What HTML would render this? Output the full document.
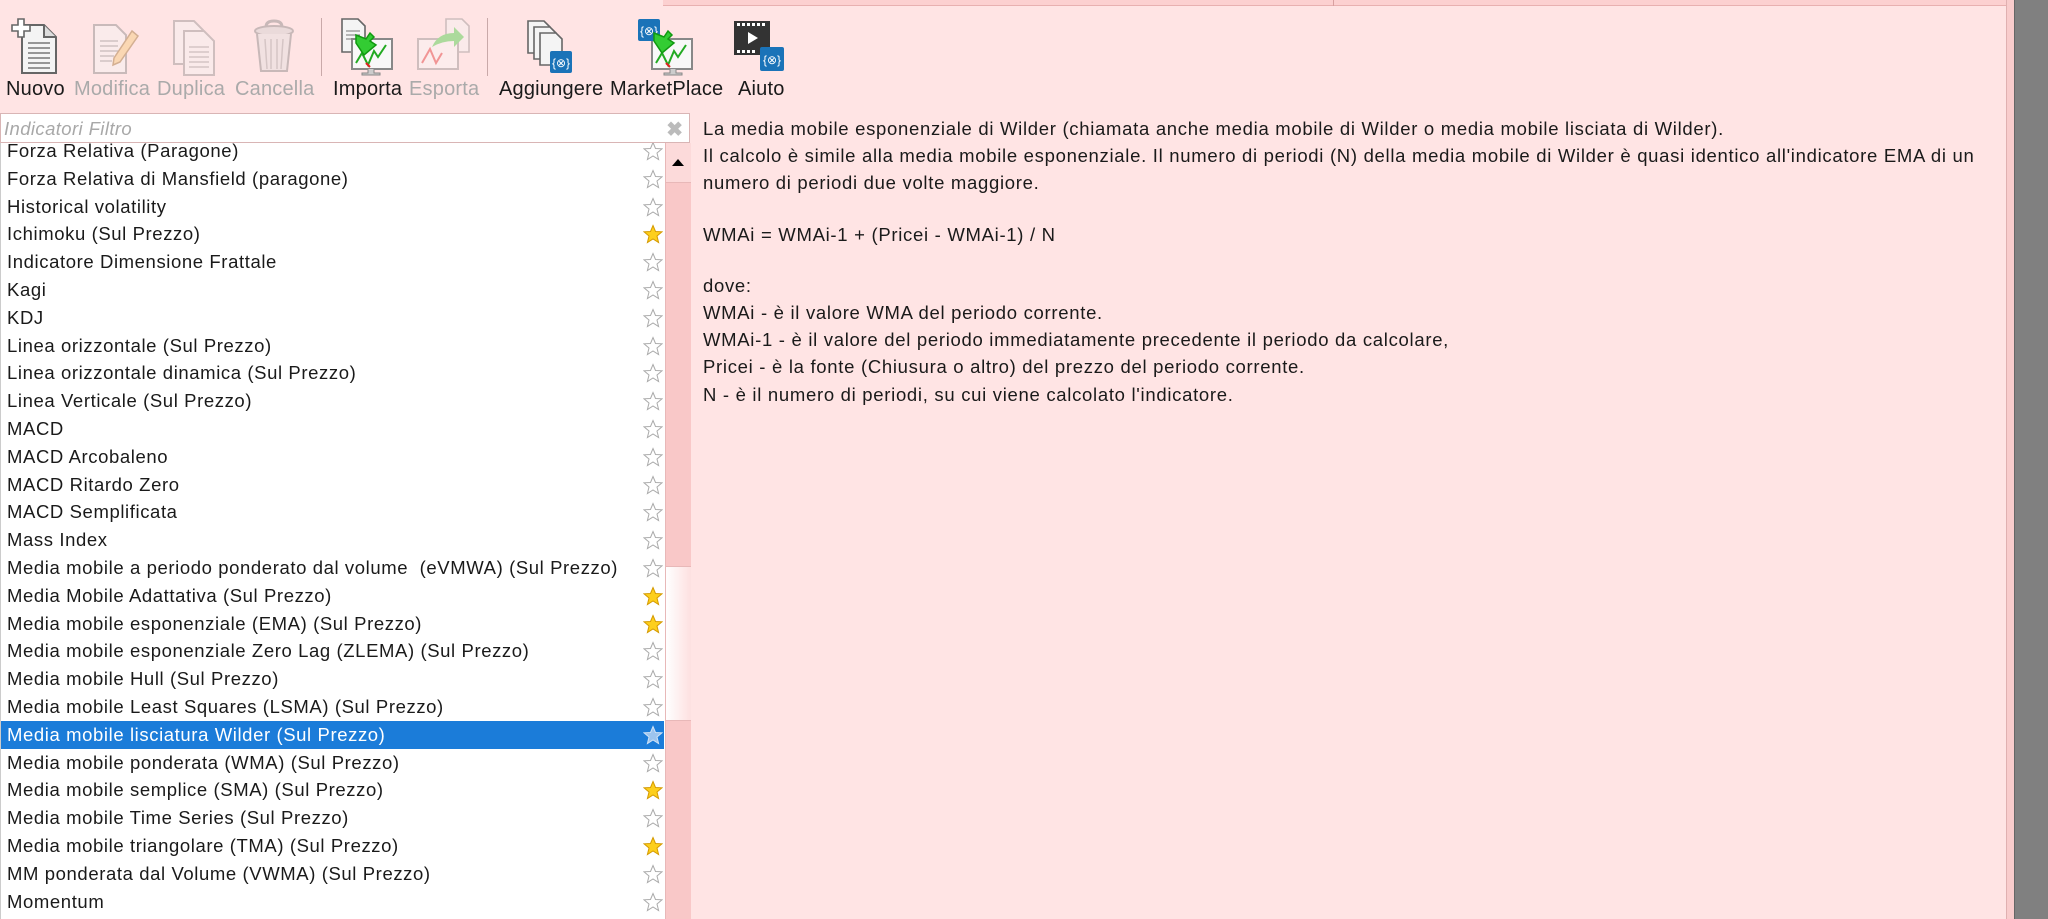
<!DOCTYPE html>
<html><head><meta charset="utf-8"><style>
*{margin:0;padding:0;box-sizing:border-box}
body{width:2048px;height:919px;overflow:hidden;background:#ffe4e4;font-family:"Liberation Sans",Arial,sans-serif;position:relative;color:#1a1a1a}
.topband{position:absolute;left:663px;top:0;width:1343px;height:6px;background:#fcd0d0;border-bottom:1px solid #e8b0b0}
.topband:after{content:"";position:absolute;left:670px;top:0;width:1px;height:6px;background:#d8a0a0}
.lbl{position:absolute;top:78px;font-size:20px;white-space:nowrap;letter-spacing:0.2px}
.dis{color:#aaa}
.ic{position:absolute;top:17px}
.sep{position:absolute;top:18px;width:1px;height:58px;background:#c9a9a9}
.filter{position:absolute;left:0;top:113px;width:690px;height:30px;background:#fff;border:1px solid #d9b5b5}
.filter span{position:absolute;left:3px;top:4px;font-size:18.5px;font-style:italic;color:#a8a8a8;letter-spacing:0.4px}
.filter i{position:absolute;right:6px;top:3px;font-style:normal;font-size:20px;color:#bbb;font-weight:bold}
.list{position:absolute;left:0;top:143px;width:665px;height:776px;background:#fff;overflow:hidden;border-left:1px solid #ccc}
.rows{position:absolute;left:0;top:-6px;width:663px}
.r{height:27.8px;line-height:27.8px;font-size:18.5px;letter-spacing:0.6px;padding-left:6px;position:relative;white-space:nowrap}
.r svg{position:absolute;right:1px;top:4px}
.sel{background:#1b7cd9;color:#fff}
.sb{position:absolute;left:665px;top:143px;width:26px;height:776px;background:#f9c8c8;border-left:1px solid #e8b8b8}
.sb .up{position:absolute;left:0;top:0;width:25px;height:40px;background:#fcdada;border-bottom:1px solid #e8b8b8}
.sb .up:after{content:"";position:absolute;left:6px;top:16px;border-left:6px solid transparent;border-right:6px solid transparent;border-bottom:7px solid #000}
.sb .th{position:absolute;left:0;top:423px;width:25px;height:155px;background:linear-gradient(90deg,#fff,#fde0e0);border-top:1px solid #e8b8b8;border-bottom:1px solid #e8b8b8}
.desc{position:absolute;left:703px;top:115px;font-size:18.5px;letter-spacing:0.7px;white-space:nowrap;color:#1a1a1a}
.desc div{height:27.2px;line-height:27.2px}
.desc .b{height:24px}
.rb{position:absolute;left:2006px;top:0;width:8px;height:919px;background:#f9cccc;border-left:1px solid #e0b0b0}
.gray{position:absolute;left:2014px;top:0;width:34px;height:919px;background:#808080;border-left:1px solid #666}
</style></head><body>
<div class="topband"></div>

<svg class="ic" style="left:10px" width="56" height="60" viewBox="0 0 56 60">
<path d="M12 8h22l12 12v36H12z" fill="#f4f4f4" stroke="#666" stroke-width="2"/><path d="M34 8v12h12" fill="#ddd" stroke="#666" stroke-width="2"/>
<g stroke="#777" stroke-width="1.5"><path d="M18 26h22M18 31h22M18 36h22M18 41h22M18 46h22M18 51h22"/></g>
<path d="M8 2h6v6h6v6h-6v6H8v-6H2V8h6z" fill="#fff" stroke="#666" stroke-width="1.6"/></svg>
<svg class="ic" style="left:86px;opacity:.45" width="56" height="60" viewBox="0 0 56 60">
<path d="M8 8h22l10 10v38H8z" fill="#f4f4f4" stroke="#888" stroke-width="2"/>
<g stroke="#999" stroke-width="1.5"><path d="M14 24h18M14 29h18M14 34h18M14 39h14M14 44h12"/></g>
<path d="M46 14l6 5-18 26-7 3 1-7z" fill="#f6c87a" stroke="#a07030" stroke-width="1.5"/></svg>
<svg class="ic" style="left:166px;opacity:.4" width="56" height="60" viewBox="0 0 56 60">
<path d="M8 4h20l9 9v34H8z" fill="#f4f4f4" stroke="#888" stroke-width="2"/>
<path d="M18 14h20l10 10v34H18z" fill="#f4f4f4" stroke="#888" stroke-width="2"/>
<g stroke="#999" stroke-width="1.5"><path d="M23 30h20M23 35h20M23 40h20M23 45h20M23 50h20"/></g></svg>
<svg class="ic" style="left:246px;opacity:.4" width="56" height="60" viewBox="0 0 56 60">
<path d="M20 10q0-6 8-6t8 6" fill="none" stroke="#777" stroke-width="3"/>
<ellipse cx="28" cy="14" rx="19" ry="5" fill="#ccc" stroke="#777" stroke-width="2"/>
<path d="M11 17l4 37h26l4-37" fill="#ddd" stroke="#777" stroke-width="2"/>
<g stroke="#999" stroke-width="1.5"><path d="M19 22l2 30M25 22v30M31 22v30M37 22l-2 30"/></g></svg>
<div class="sep" style="left:321px"></div>
<svg class="ic" style="left:338px" width="56" height="60" viewBox="0 0 56 60">
<path d="M4 2h16l7 7v26H4z" fill="#f4f4f4" stroke="#666" stroke-width="1.6"/><g stroke="#777"><path d="M8 14h14M8 18h14M8 22h14"/></g>
<rect x="14" y="22" width="40" height="30" fill="#f8f8f8" stroke="#888" stroke-width="2"/><path d="M30 52v4h-6v2h18v-2h-6v-4" fill="#ccc" stroke="#888"/>
<path d="M18 46l6-10 6 12 6-14 4 6 8-12" fill="none" stroke="#2a2" stroke-width="2"/><path d="M28 46l4 4" stroke="#d22" stroke-width="2"/>
<path d="M18 18l10 4 4-6 4 4-4 4 6 4-12 10-8-12z" fill="#3c3" stroke="#191" stroke-width="1.5"/></svg>
<svg class="ic" style="left:416px;opacity:.4" width="56" height="60" viewBox="0 0 56 60">
<path d="M30 2h16l7 7v26H30z" fill="#f4f4f4" stroke="#888" stroke-width="1.6"/>
<rect x="2" y="22" width="40" height="30" fill="#f8f8f8" stroke="#888" stroke-width="2"/>
<path d="M6 46l8-14 6 14 6-10" fill="none" stroke="#d22" stroke-width="2"/>
<path d="M16 30q6-14 22-14v-6l10 10-10 10v-6q-12 0-22 6z" fill="#3c3"/></svg>
<div class="sep" style="left:487px"></div>
<svg class="ic" style="left:522px" width="56" height="60" viewBox="0 0 56 60">
<path d="M6 4h16l6 6v26H6z" fill="#f4f4f4" stroke="#666" stroke-width="1.6"/>
<path d="M12 10h16l6 6v26H12z" fill="#f4f4f4" stroke="#666" stroke-width="1.6"/>
<path d="M18 16h16l6 6v26H18z" fill="#f4f4f4" stroke="#666" stroke-width="1.6"/>
<rect x="28" y="34" width="22" height="22" rx="2" fill="#1a73b8"/><text x="39" y="50" font-size="12" fill="#fff" text-anchor="middle" font-family="Liberation Sans">{&#8855;}</text></svg>
<svg class="ic" style="left:636px" width="60" height="60" viewBox="0 0 60 60">
<rect x="16" y="22" width="40" height="30" fill="#f8f8f8" stroke="#888" stroke-width="2"/><path d="M34 52v4h-6v2h18v-2h-6v-4" fill="#ccc" stroke="#888"/>
<path d="M20 46l6-10 6 12 6-14 4 6 8-12" fill="none" stroke="#2a2" stroke-width="2"/><path d="M30 46l4 4" stroke="#d22" stroke-width="2"/>
<rect x="2" y="2" width="22" height="22" rx="2" fill="#1a73b8"/><text x="13" y="18" font-size="12" fill="#fff" text-anchor="middle" font-family="Liberation Sans">{&#8855;}</text>
<path d="M18 16l10 4 4-6 4 4-4 4 6 4-12 10-8-12z" fill="#3c3" stroke="#191" stroke-width="1.5"/></svg>
<svg class="ic" style="left:732px" width="56" height="60" viewBox="0 0 56 60">
<rect x="2" y="4" width="36" height="34" fill="#333"/><g fill="#fff"><path d="M5 6h3v3H5zM10 6h3v3h-3zM15 6h3v3h-3zM20 6h3v3h-3zM25 6h3v3h-3zM30 6h3v3h-3zM5 33h3v3H5zM10 33h3v3h-3zM15 33h3v3h-3zM20 33h3v3h-3z"/><path d="M16 15l10 6-10 6z"/></g>
<rect x="28" y="30" width="24" height="24" rx="2" fill="#1a73b8"/><text x="40" y="47" font-size="12" fill="#fff" text-anchor="middle" font-family="Liberation Sans">{&#8855;}</text></svg>

<div class="lbl" style="left:6px">Nuovo</div>
<div class="lbl dis" style="left:74px">Modifica</div>
<div class="lbl dis" style="left:157px">Duplica</div>
<div class="lbl dis" style="left:235px">Cancella</div>
<div class="lbl" style="left:333px">Importa</div>
<div class="lbl dis" style="left:409px">Esporta</div>
<div class="lbl" style="left:499px">Aggiungere</div>
<div class="lbl" style="left:610px">MarketPlace</div>
<div class="lbl" style="left:738px">Aiuto</div>

<div class="filter"><span>Indicatori Filtro</span><i>✖</i></div>

<svg width="0" height="0" style="position:absolute"><defs>
<symbol id="so" viewBox="0 0 20 20"><polygon points="10,1.5 12.5,7.5 19,7.8 14,12 15.6,18.5 10,15 4.4,18.5 6,12 1,7.8 7.5,7.5" fill="#fff" stroke="#aaa" stroke-width="1"/></symbol>
<symbol id="sg" viewBox="0 0 20 20"><polygon points="10,1.5 12.5,7.5 19,7.8 14,12 15.6,18.5 10,15 4.4,18.5 6,12 1,7.8 7.5,7.5" fill="#fdcf1c" stroke="#d49a00" stroke-width="1"/></symbol>
<symbol id="sw" viewBox="0 0 20 20"><polygon points="10,1.5 12.5,7.5 19,7.8 14,12 15.6,18.5 10,15 4.4,18.5 6,12 1,7.8 7.5,7.5" fill="#9cc4ee" stroke="#cfe2f6" stroke-width="1"/></symbol>
</defs></svg>

<div class="list"><div class="rows">
<div class="r">Forza Relativa (Paragone)<svg width="20" height="20"><use href="#so"/></svg></div>
<div class="r">Forza Relativa di Mansfield (paragone)<svg width="20" height="20"><use href="#so"/></svg></div>
<div class="r">Historical volatility<svg width="20" height="20"><use href="#so"/></svg></div>
<div class="r">Ichimoku (Sul Prezzo)<svg width="20" height="20"><use href="#sg"/></svg></div>
<div class="r">Indicatore Dimensione Frattale<svg width="20" height="20"><use href="#so"/></svg></div>
<div class="r">Kagi<svg width="20" height="20"><use href="#so"/></svg></div>
<div class="r">KDJ<svg width="20" height="20"><use href="#so"/></svg></div>
<div class="r">Linea orizzontale (Sul Prezzo)<svg width="20" height="20"><use href="#so"/></svg></div>
<div class="r">Linea orizzontale dinamica (Sul Prezzo)<svg width="20" height="20"><use href="#so"/></svg></div>
<div class="r">Linea Verticale (Sul Prezzo)<svg width="20" height="20"><use href="#so"/></svg></div>
<div class="r">MACD<svg width="20" height="20"><use href="#so"/></svg></div>
<div class="r">MACD Arcobaleno<svg width="20" height="20"><use href="#so"/></svg></div>
<div class="r">MACD Ritardo Zero<svg width="20" height="20"><use href="#so"/></svg></div>
<div class="r">MACD Semplificata<svg width="20" height="20"><use href="#so"/></svg></div>
<div class="r">Mass Index<svg width="20" height="20"><use href="#so"/></svg></div>
<div class="r">Media mobile a periodo ponderato dal volume &nbsp;(eVMWA) (Sul Prezzo)<svg width="20" height="20"><use href="#so"/></svg></div>
<div class="r">Media Mobile Adattativa (Sul Prezzo)<svg width="20" height="20"><use href="#sg"/></svg></div>
<div class="r">Media mobile esponenziale (EMA) (Sul Prezzo)<svg width="20" height="20"><use href="#sg"/></svg></div>
<div class="r">Media mobile esponenziale Zero Lag (ZLEMA) (Sul Prezzo)<svg width="20" height="20"><use href="#so"/></svg></div>
<div class="r">Media mobile Hull (Sul Prezzo)<svg width="20" height="20"><use href="#so"/></svg></div>
<div class="r">Media mobile Least Squares (LSMA) (Sul Prezzo)<svg width="20" height="20"><use href="#so"/></svg></div>
<div class="r sel">Media mobile lisciatura Wilder (Sul Prezzo)<svg width="20" height="20"><use href="#sw"/></svg></div>
<div class="r">Media mobile ponderata (WMA) (Sul Prezzo)<svg width="20" height="20"><use href="#so"/></svg></div>
<div class="r">Media mobile semplice (SMA) (Sul Prezzo)<svg width="20" height="20"><use href="#sg"/></svg></div>
<div class="r">Media mobile Time Series (Sul Prezzo)<svg width="20" height="20"><use href="#so"/></svg></div>
<div class="r">Media mobile triangolare (TMA) (Sul Prezzo)<svg width="20" height="20"><use href="#sg"/></svg></div>
<div class="r">MM ponderata dal Volume (VWMA) (Sul Prezzo)<svg width="20" height="20"><use href="#so"/></svg></div>
<div class="r">Momentum<svg width="20" height="20"><use href="#so"/></svg></div>
</div></div>
<div class="sb"><div class="up"></div><div class="th"></div></div>

<div class="desc">
<div>La media mobile esponenziale di Wilder (chiamata anche media mobile di Wilder o media mobile lisciata di Wilder).</div>
<div>Il calcolo è simile alla media mobile esponenziale. Il numero di periodi (N) della media mobile di Wilder è quasi identico all'indicatore EMA di un</div>
<div>numero di periodi due volte maggiore.</div>
<div class="b"></div>
<div>WMAi = WMAi-1 + (Pricei - WMAi-1) / N</div>
<div class="b"></div>
<div>dove:</div>
<div>WMAi - è il valore WMA del periodo corrente.</div>
<div>WMAi-1 - è il valore del periodo immediatamente precedente il periodo da calcolare,</div>
<div>Pricei - è la fonte (Chiusura o altro) del prezzo del periodo corrente.</div>
<div>N - è il numero di periodi, su cui viene calcolato l'indicatore.</div>
</div>

<div class="rb"></div>
<div class="gray"></div>
</body></html>
